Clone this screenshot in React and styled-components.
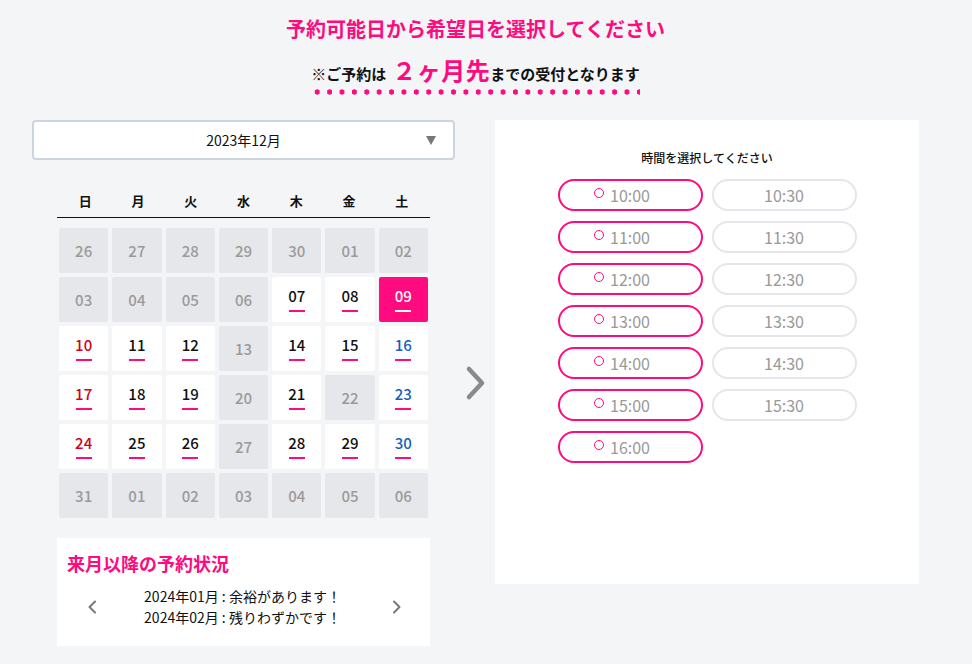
import React from 'react'
import styled, { createGlobalStyle } from 'styled-components'

const PINK = '#ff0a7f'

const Global = createGlobalStyle`
    body {
        margin: 0;
        background: #f4f5f7;
        font-family: "Noto Sans CJK JP", "Noto Sans", sans-serif;
        color: #111;
    }
`

const Page = styled.div`
    width: 972px;
    height: 664px;
    box-sizing: border-box;
    padding: 15px 53px 0 32px;
`

const Heading = styled.h1`
    margin: 0;
    text-align: center;
    font-size: 20px;
    line-height: 28px;
    font-weight: 700;
    color: ${PINK};
`

const NoteWrap = styled.div`
    display: flex;
    justify-content: center;
    margin-top: 12px;
`

const Note = styled.p`
    margin: 0;
    font-size: 15px;
    font-weight: 700;
    line-height: 30px;
    padding-bottom: 6px;
    background-image: radial-gradient(circle, ${PINK} 2.4px, transparent 2.9px);
    background-size: 12.4px 6px;
    background-repeat: repeat-x;
    background-position: 0 100%;
`

const Big = styled.span`
    font-size: 24px;
    color: ${PINK};
    margin-left: 6px;
    letter-spacing: 0.5px;
`

const Main = styled.div`
    display: flex;
    align-items: center;
    margin-top: 25px;
`

const LeftCol = styled.div`
    width: 423px;
    display: flex;
    flex-direction: column;
`

const Select = styled.div`
    height: 40px;
    box-sizing: border-box;
    border: 2px solid #ccd4df;
    border-radius: 4px;
    background: #fff;
    display: flex;
    align-items: center;
    justify-content: center;
    position: relative;
    font-size: 14px;

    &::after {
        content: '';
        position: absolute;
        right: 17px;
        top: 14px;
        border-left: 5px solid transparent;
        border-right: 5px solid transparent;
        border-top: 9px solid #777;
    }
`

const Calendar = styled.div`
    margin: 23px 25px 0;
`

const Weekdays = styled.div`
    display: grid;
    grid-template-columns: repeat(7, 1fr);
    border-bottom: 1px solid #111;
    height: 34px;
    align-items: center;
    padding: 0 2px;
    font-size: 13px;
    font-weight: 700;
    text-align: center;
`

const Days = styled.div`
    display: grid;
    grid-template-columns: repeat(7, 1fr);
    grid-auto-rows: 45px;
    gap: 4px;
    margin: 10px 2px 0;
`

const dayColor = ({ $state, $tone }) => {
    if ($state === 'off') return '#9a9a9a'
    if ($state === 'sel') return '#fff'
    if ($tone === 'sun') return '#d0021b'
    if ($tone === 'sat') return '#1560bd'
    return '#111'
}

const Day = styled.div`
    border-radius: 2px;
    background: ${p => (p.$state === 'off' ? '#e6e7ea' : p.$state === 'sel' ? PINK : '#fff')};
    color: ${dayColor};
    display: flex;
    flex-direction: column;
    align-items: center;
    justify-content: center;
    font-size: 15px;
    font-weight: 500;
    line-height: 18px;

    &::after {
        content: '';
        display: ${p => (p.$state === 'off' ? 'none' : 'block')};
        width: 16px;
        height: 2px;
        margin-top: 5px;
        background: ${p => (p.$state === 'sel' ? '#fff' : PINK)};
    }
`

const Outlook = styled.div`
    margin: 20px 25px 0;
    background: #fff;
    height: 108px;
    box-sizing: border-box;
    padding: 12px 10px 0;
`

const OutlookTitle = styled.h2`
    margin: 0;
    font-size: 18px;
    line-height: 26px;
    font-weight: 700;
    color: ${PINK};
`

const OutlookBody = styled.div`
    display: flex;
    align-items: center;
    justify-content: space-between;
    padding: 0 16px 0 18px;
    margin-top: 10px;
`

const OutlookLines = styled.div`
    font-size: 14px;
    line-height: 21px;
    font-weight: 400;
    padding-right: 4px;
`

const Chevron = ({ dir = 'right', color = '#777' }) => (
    <svg width="14" height="16" viewBox="0 0 14 16" fill="none">
        <path
            d={dir === 'right' ? 'M4 2.5 L9.5 8 L4 13.5' : 'M10 2.5 L4.5 8 L10 13.5'}
            stroke={color}
            strokeWidth="2"
            strokeLinecap="round"
            strokeLinejoin="round"
        />
    </svg>
)

const BigArrow = () => (
    <svg width="22" height="36" viewBox="0 0 22 36" fill="none">
        <path
            d="M4 4 L17 18 L4 32"
            stroke="#8a8a8a"
            strokeWidth="4.5"
            strokeLinecap="round"
            strokeLinejoin="round"
        />
    </svg>
)

const Arrow = styled.div`
    width: 40px;
    display: flex;
    justify-content: center;
    padding-left: 2px;
    box-sizing: border-box;
`

const Panel = styled.div`
    align-self: flex-start;
    width: 424px;
    height: 464px;
    background: #fff;
    box-sizing: border-box;
    padding-top: 29px;
    display: flex;
    flex-direction: column;
    align-items: center;
`

const PanelTitle = styled.p`
    margin: 0;
    font-size: 12px;
    line-height: 18px;
    font-weight: 500;
`

const Times = styled.div`
    display: grid;
    grid-template-columns: 145px 145px;
    column-gap: 9px;
    row-gap: 10px;
    margin-top: 12px;
`

const Slot = styled.div`
    height: 32px;
    box-sizing: border-box;
    border: 2px solid ${p => (p.$open ? PINK : '#e5e5ea')};
    border-radius: 16px;
    display: flex;
    align-items: center;
    justify-content: center;
    font-size: 16px;
    color: #999;
    padding-bottom: 1px;
`

const SlotLabel = styled.span`
    position: relative;

    &::before {
        content: '';
        display: ${p => (p.$open ? 'block' : 'none')};
        position: absolute;
        left: -16px;
        top: 5px;
        width: 8px;
        height: 8px;
        border: 1.5px solid ${PINK};
        border-radius: 50%;
    }
`

const rows = [
    ['26', '27', '28', '29', '30', '01', '02'],
    ['03', '04', '05', '06', '07', '08', '09'],
    ['10', '11', '12', '13', '14', '15', '16'],
    ['17', '18', '19', '20', '21', '22', '23'],
    ['24', '25', '26', '27', '28', '29', '30'],
    ['31', '01', '02', '03', '04', '05', '06'],
]

const offDays = new Set(['0-*', '1-0', '1-1', '1-2', '1-3', '2-3', '3-3', '3-5', '4-3', '5-*'])

const stateOf = (r, c) => {
    if (offDays.has(`${r}-*`) || offDays.has(`${r}-${c}`)) return 'off'
    if (r === 1 && c === 6) return 'sel'
    return 'on'
}

const toneOf = c => (c === 0 ? 'sun' : c === 6 ? 'sat' : null)

const slots = [
    ['10:00', true], ['10:30', false],
    ['11:00', true], ['11:30', false],
    ['12:00', true], ['12:30', false],
    ['13:00', true], ['13:30', false],
    ['14:00', true], ['14:30', false],
    ['15:00', true], ['15:30', false],
    ['16:00', true],
]

export default function App() {
    return (
        <Page>
            <Global />
            <Heading>予約可能日から希望日を選択してください</Heading>
            <NoteWrap>
                <Note>
                    ※ご予約は<Big>２ヶ月先</Big>までの受付となります
                </Note>
            </NoteWrap>
            <Main>
                <LeftCol>
                    <Select>2023年12月</Select>
                    <Calendar>
                        <Weekdays>
                            {['日', '月', '火', '水', '木', '金', '土'].map(d => (
                                <span key={d}>{d}</span>
                            ))}
                        </Weekdays>
                        <Days>
                            {rows.map((row, r) =>
                                row.map((d, c) => (
                                    <Day key={`${r}-${c}`} $state={stateOf(r, c)} $tone={toneOf(c)}>
                                        {d}
                                    </Day>
                                ))
                            )}
                        </Days>
                    </Calendar>
                    <Outlook>
                        <OutlookTitle>来月以降の予約状況</OutlookTitle>
                        <OutlookBody>
                            <Chevron dir="left" />
                            <OutlookLines>
                                <div>2024年01月 : 余裕があります！</div>
                                <div>2024年02月 : 残りわずかです！</div>
                            </OutlookLines>
                            <Chevron dir="right" />
                        </OutlookBody>
                    </Outlook>
                </LeftCol>
                <Arrow>
                    <BigArrow />
                </Arrow>
                <Panel>
                    <PanelTitle>時間を選択してください</PanelTitle>
                    <Times>
                        {slots.map(([t, open]) => (
                            <Slot key={t} $open={open}>
                                <SlotLabel $open={open}>{t}</SlotLabel>
                            </Slot>
                        ))}
                    </Times>
                </Panel>
            </Main>
        </Page>
    )
}
